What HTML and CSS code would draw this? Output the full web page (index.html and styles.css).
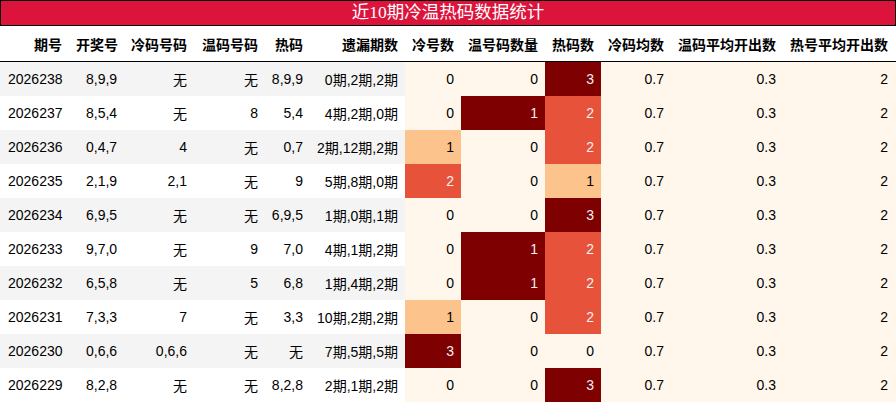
FILE: index.html
```html
<!DOCTYPE html>
<html lang="zh">
<head>
<meta charset="utf-8">
<title>近10期冷温热码数据统计</title>
<link rel="stylesheet" href="styles.css">
</head>
<body>
<div class="title">近10期冷温热码数据统计</div>
<table class="stats">
  <colgroup>
    <col class="c1"><col class="c2"><col class="c3"><col class="c4"><col class="c5"><col class="c6">
    <col class="c7"><col class="c8"><col class="c9"><col class="c10"><col class="c11"><col class="c12">
  </colgroup>
  <thead>
    <tr>
      <th>期号</th><th>开奖号</th><th>冷码号码</th><th>温码号码</th><th>热码</th><th>遗漏期数</th>
      <th>冷号数</th><th>温号码数量</th><th>热码数</th><th>冷码均数</th><th>温码平均开出数</th><th>热号平均开出数</th>
    </tr>
  </thead>
  <tbody>
    <tr class="odd"><td class="l">2026238</td><td class="l">8,9,9</td><td>无</td><td>无</td><td>8,9,9</td><td>0期,2期,2期</td><td class="g0">0</td><td class="g0">0</td><td class="g3">3</td><td class="g0 ctr">0.7</td><td class="g0 ctr">0.3</td><td class="g0">2</td></tr>
    <tr><td class="l">2026237</td><td class="l">8,5,4</td><td>无</td><td>8</td><td>5,4</td><td>4期,2期,0期</td><td class="g0">0</td><td class="g3">1</td><td class="g2">2</td><td class="g0 ctr">0.7</td><td class="g0 ctr">0.3</td><td class="g0">2</td></tr>
    <tr class="odd"><td class="l">2026236</td><td class="l">0,4,7</td><td>4</td><td>无</td><td>0,7</td><td>2期,12期,2期</td><td class="g1">1</td><td class="g0">0</td><td class="g2">2</td><td class="g0 ctr">0.7</td><td class="g0 ctr">0.3</td><td class="g0">2</td></tr>
    <tr><td class="l">2026235</td><td class="l">2,1,9</td><td>2,1</td><td>无</td><td>9</td><td>5期,8期,0期</td><td class="g2">2</td><td class="g0">0</td><td class="g1">1</td><td class="g0 ctr">0.7</td><td class="g0 ctr">0.3</td><td class="g0">2</td></tr>
    <tr class="odd"><td class="l">2026234</td><td class="l">6,9,5</td><td>无</td><td>无</td><td>6,9,5</td><td>1期,0期,1期</td><td class="g0">0</td><td class="g0">0</td><td class="g3">3</td><td class="g0 ctr">0.7</td><td class="g0 ctr">0.3</td><td class="g0">2</td></tr>
    <tr><td class="l">2026233</td><td class="l">9,7,0</td><td>无</td><td>9</td><td>7,0</td><td>4期,1期,2期</td><td class="g0">0</td><td class="g3">1</td><td class="g2">2</td><td class="g0 ctr">0.7</td><td class="g0 ctr">0.3</td><td class="g0">2</td></tr>
    <tr class="odd"><td class="l">2026232</td><td class="l">6,5,8</td><td>无</td><td>5</td><td>6,8</td><td>1期,4期,2期</td><td class="g0">0</td><td class="g3">1</td><td class="g2">2</td><td class="g0 ctr">0.7</td><td class="g0 ctr">0.3</td><td class="g0">2</td></tr>
    <tr><td class="l">2026231</td><td class="l">7,3,3</td><td>7</td><td>无</td><td>3,3</td><td>10期,2期,2期</td><td class="g1">1</td><td class="g0">0</td><td class="g2">2</td><td class="g0 ctr">0.7</td><td class="g0 ctr">0.3</td><td class="g0">2</td></tr>
    <tr class="odd"><td class="l">2026230</td><td class="l">0,6,6</td><td>0,6,6</td><td>无</td><td>无</td><td>7期,5期,5期</td><td class="g3">3</td><td class="g0">0</td><td class="g0">0</td><td class="g0 ctr">0.7</td><td class="g0 ctr">0.3</td><td class="g0">2</td></tr>
    <tr><td class="l">2026229</td><td class="l">8,2,8</td><td>无</td><td>无</td><td>8,2,8</td><td>2期,1期,2期</td><td class="g0">0</td><td class="g0">0</td><td class="g3">3</td><td class="g0 ctr">0.7</td><td class="g0 ctr">0.3</td><td class="g0">2</td></tr>
  </tbody>
</table>
</body>
</html>
```
FILE: styles.css
```css
html, body {
  margin: 0;
  padding: 0;
  background: #ffffff;
}
body {
  width: 896px;
  font-family: "Liberation Sans", "Noto Sans CJK SC", sans-serif;
  font-size: 14px;
  color: #000;
}
.title {
  box-sizing: border-box;
  height: 26px;
  border: 1px solid #000;
  background: #dc143c;
  color: #fff;
  text-align: center;
  font-family: "Liberation Serif", "Noto Sans CJK SC", serif;
  font-size: 17.5px;
  line-height: 23px;
}
.stats {
  width: 896px;
  table-layout: fixed;
  border-collapse: collapse;
  border-spacing: 0;
}
.c1 { width: 69px; }
.c2 { width: 56px; }
.c3 { width: 69px; }
.c4 { width: 71px; }
.c5 { width: 45px; }
.c6 { width: 95px; }
.c7 { width: 56px; }
.c8 { width: 84px; }
.c9 { width: 56px; }
.c10 { width: 70px; }
.c11 { width: 112px; }
.c12 { width: 113px; }
.stats th {
  height: 35px;
  padding: 0 7px 0 0;
  text-align: right;
  font-weight: bold;
  white-space: nowrap;
  border-bottom: 1px solid #000;
  font-family: "Noto Sans CJK SC", sans-serif;
}
.stats th:last-child {
  padding-right: 8px;
}
.stats td {
  height: 34px;
  padding: 0 7px 0 0;
  text-align: right;
  white-space: nowrap;
  box-sizing: border-box;
}
.stats td:last-child {
  padding-right: 8px;
}
.stats td.l {
  text-align: left;
  padding-left: 8px;
}
.stats td.l:nth-child(2) {
  padding-left: 17px;
}
.stats td.ctr {
  text-align: center;
  padding-right: 0;
}
.stats td.ctr:nth-child(10) {
  padding-right: 7px;
  text-align: right;
}
.stats td.ctr:nth-child(11) {
  padding-right: 7px;
  text-align: right;
}
.stats tr.odd td {
  background: #f4f4f4;
}
.stats tr td.g0 { background: #fff7ec; color: #000; }
.stats tr td.g1 { background: #fdc38d; color: #000; }
.stats tr td.g2 { background: #e7533a; color: #f1f1f1; }
.stats tr td.g3 { background: #7f0000; color: #f1f1f1; }
```
